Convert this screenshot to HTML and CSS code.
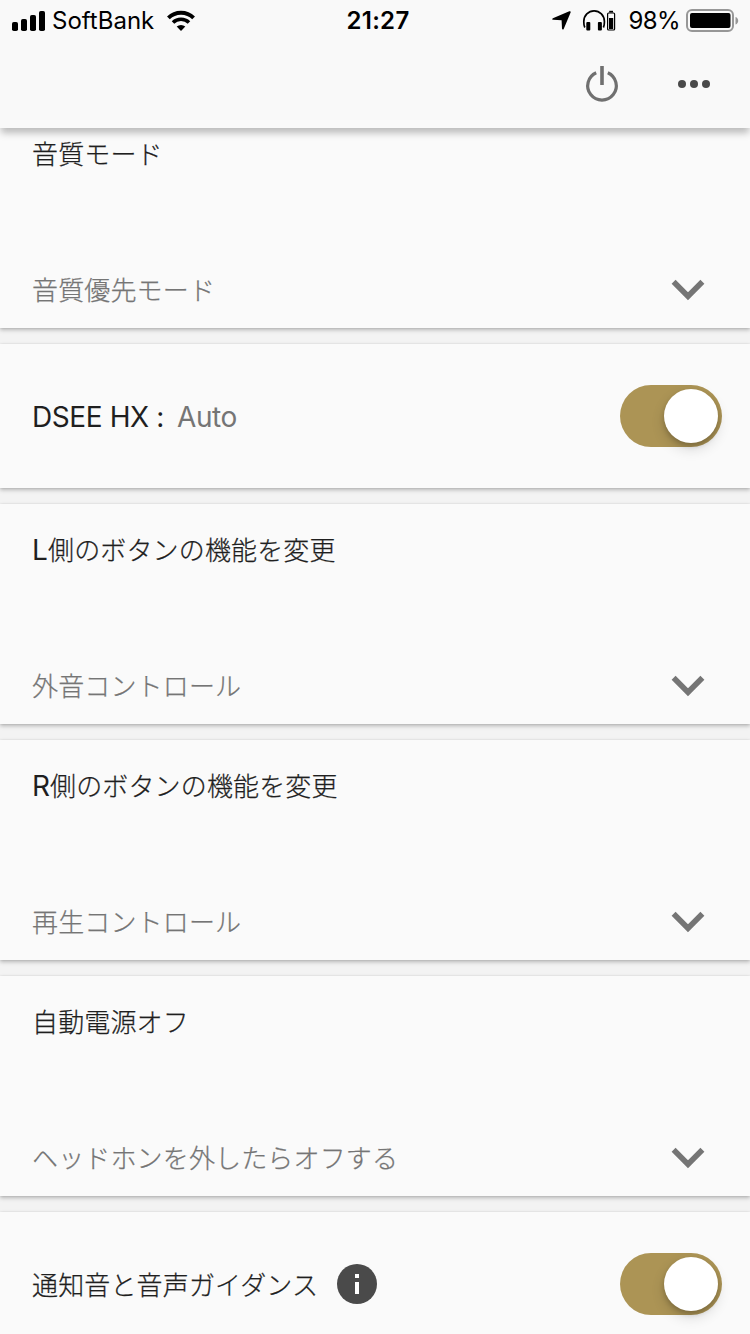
FILE: index.html
```html
<!DOCTYPE html>
<html lang="ja">
<head>
    <meta charset="UTF-8">
    <meta name="viewport" content="width=device-width, initial-scale=1.0">
    <title>Headphones</title>
    <link rel="stylesheet" href="styles.css">
</head>
<body>
    <header class="header">
        <div class="status-bar">
            <div class="status-left">
                <svg class="signal" width="34" height="20" viewBox="0 0 34 20">
                    <rect x="0" y="11" width="6" height="9" rx="1.8"/>
                    <rect x="9" y="8" width="6" height="12" rx="1.8"/>
                    <rect x="18" y="4" width="6" height="16" rx="1.8"/>
                    <rect x="27" y="0" width="6" height="20" rx="1.8"/>
                </svg>
                <span class="carrier">SoftBank</span>
                <svg class="wifi" width="28" height="20" viewBox="0 0 28 20">
                    <path d="M1.4 6.9a18 18 0 0 1 25.2 0" fill="none" stroke="#000" stroke-width="3.9"/>
                    <path d="M6 11.5a11.5 11.5 0 0 1 16 0" fill="none" stroke="#000" stroke-width="3.6"/>
                    <path d="M14 20l-4.3-4.4a6.3 6.3 0 0 1 8.6 0z"/>
                </svg>
            </div>
            <span class="time">21:27</span>
            <div class="status-right">
                <svg class="location" width="19" height="19" viewBox="0 0 19 19">
                    <path d="M17.3.3.9 7.2c-1 .5-.8 1.5.3 1.6l8.4.4.4 8.3c.1 1.2 1.2 1.5 1.7.4L18.6 1.6c.4-1-.4-1.7-1.3-1.3z"/>
                </svg>
                <svg class="headphones" width="33" height="21" viewBox="0 0 33 21">
                    <path d="M1.8 17.5C.7 15.5.8 14 .8 11.500a10.300 10.700 0 0 1 20.600 0c0 2.500.1 4-1 6" fill="none" stroke="#000" stroke-width="1.7"/>
                    <rect x="3.3" y="12" width="4" height="8.5" rx="1"/>
                    <rect x="14.900" y="12" width="4" height="8.5" rx="1"/>
                    <rect x="24.600" y="3" width="7" height="17" rx="1" fill="none" stroke="#000" stroke-width="1.2"/>
                    <rect x="26.200" y="0.8" width="3.8" height="1.7"/>
                    <rect x="26" y="8" width="4.2" height="11"/>
                </svg>
                <span class="percent">98%</span>
                <svg class="battery" width="53" height="24" viewBox="0 0 53 24">
                    <rect x="1" y="1" width="46" height="21" rx="5" fill="none" stroke="#979797" stroke-width="2"/>
                    <rect x="4" y="4" width="40.500" height="15" rx="2"/>
                    <path d="M49.500 8c3.600 1 3.600 6.500 0 7.500z" fill="#979797"/>
                </svg>
            </div>
        </div>
        <div class="toolbar">
            <svg class="power" width="34" height="38" viewBox="0 0 34 38" fill="none" stroke="#707070">
                <path d="M11.200 7.700a14.300 14.300 0 1 0 11.600 0" stroke-width="3.2"/>
                <path d="M17 1v19" stroke-width="3.6"/>
            </svg>
            <svg class="more" width="32" height="8" viewBox="0 0 32 8" fill="#4a4a4a">
                <circle cx="4" cy="4" r="4"/>
                <circle cx="16" cy="4" r="4"/>
                <circle cx="28" cy="4" r="4"/>
            </svg>
        </div>
    </header>

    <main class="cards">
        <section class="card select-card">
            <div class="title">音質モード</div>
            <div class="value-row">
                <span class="value">音質優先モード</span>
                <svg class="chevron" width="32" height="20" viewBox="0 0 32 20"><path d="M1.6 1.8 16 16.2 30.4 1.8"/></svg>
            </div>
        </section>

        <section class="card toggle-card">
            <div class="latin">DSEE HX :<span class="mode">Auto</span></div>
            <div class="toggle"><div class="knob"></div></div>
        </section>

        <section class="card select-card">
            <div class="title"><span class="side side-l">L</span>側のボタンの機能を変更</div>
            <div class="value-row">
                <span class="value">外音コントロール</span>
                <svg class="chevron" width="32" height="20" viewBox="0 0 32 20"><path d="M1.6 1.8 16 16.2 30.4 1.8"/></svg>
            </div>
        </section>

        <section class="card select-card">
            <div class="title"><span class="side side-r">R</span>側のボタンの機能を変更</div>
            <div class="value-row">
                <span class="value">再生コントロール</span>
                <svg class="chevron" width="32" height="20" viewBox="0 0 32 20"><path d="M1.6 1.8 16 16.2 30.4 1.8"/></svg>
            </div>
        </section>

        <section class="card select-card">
            <div class="title">自動電源オフ</div>
            <div class="value-row">
                <span class="value">ヘッドホンを外したらオフする</span>
                <svg class="chevron" width="32" height="20" viewBox="0 0 32 20"><path d="M1.6 1.8 16 16.2 30.4 1.8"/></svg>
            </div>
        </section>

        <section class="card toggle-card">
            <div class="guidance">
                <span class="title">通知音と音声ガイダンス</span>
                <svg class="info" width="40" height="40" viewBox="0 0 40 40">
                    <circle cx="20" cy="20" r="20" fill="#4a4a4a"/>
                    <path d="M18 10h4v4h-4zM18 18h4v12h-4z" fill="#fff"/>
                </svg>
            </div>
            <div class="toggle"><div class="knob"></div></div>
        </section>
    </main>
</body>
</html>
```
FILE: styles.css
```css
* {
    box-sizing: border-box;
}
body {
    margin: 0;
    height: 1334px;
    overflow: hidden;
    background: #f3f3f3;
    color: #1f1f1f;
    font-family: Inter, 'Noto Sans CJK JP', sans-serif;
}
svg {
    display: block;
    flex: none;
    overflow: visible;
}

/* header */
.header {
    position: relative;
    z-index: 1;
    height: 128px;
    background: #f9f9f9;
    box-shadow: 0 6px 7px -1px rgba(0, 0, 0, 0.25);
}
.status-bar {
    display: grid;
    grid-template-columns: 1fr auto 1fr;
    height: 41px;
    padding: 1px 11px 0 12px;
    font-size: 24px;
    line-height: 40px;
    color: #000;
}
.status-left,
.status-right {
    display: flex;
    align-items: center;
}
.status-right {
    justify-content: flex-end;
}
.signal,
.wifi,
.location,
.battery {
    margin-top: -1px;
}
.headphones {
    margin: -2px 13px 0 12px;
}
.carrier {
    margin: 0 13px 0 6px;
}
.time {
    padding-left: 5px;
    font-weight: 600;
    letter-spacing: 0.3px;
}
.percent {
    margin-right: 6px;
    letter-spacing: -0.6px;
}
.toolbar {
    display: flex;
    align-items: center;
    justify-content: flex-end;
    gap: 59px;
    height: 87px;
    padding-right: 40px;
}
.power {
    margin-top: -1px;
}
.more {
    margin-top: -2px;
}

/* cards */
.cards {
    display: flex;
    flex-direction: column;
    gap: 16px;
    margin-top: -20px;
}
.card {
    background: #fafafa;
    box-shadow: 0 2px 4px rgba(0, 0, 0, 0.25), 0 0 2px rgba(0, 0, 0, 0.1);
}
.select-card {
    display: flex;
    flex-direction: column;
    justify-content: space-between;
    height: 220px;
    padding: 25px 46px 19px 32px;
}
.title,
.value {
    font-family: 'Noto Sans CJK JP', sans-serif;
    font-size: 26px;
    font-weight: 300;
    line-height: 40px;
    letter-spacing: 0.15px;
    -webkit-text-stroke: 0.25px currentColor;
}
.value {
    color: #757575;
}
.value-row {
    display: flex;
    align-items: center;
    justify-content: space-between;
}
.value-row .chevron {
    margin-top: 2px;
}
.side {
    display: inline-block;
    font-family: Inter, sans-serif;
    font-size: 28px;
    font-weight: 400;
    line-height: 1;
    -webkit-text-stroke: 0;
}
.side-l {
    width: 16px;
}
.side-r {
    width: 18px;
}
.chevron path {
    fill: none;
    stroke: #757575;
    stroke-width: 5.6;
}
.toggle-card {
    display: flex;
    align-items: center;
    justify-content: space-between;
    height: 144px;
    padding: 0 28px 0 32px;
}
.latin {
    padding-top: 2px;
    font-size: 28px;
    letter-spacing: -0.4px;
    font-feature-settings: 'calt' 0;
}
.mode {
    margin-left: 13px;
    color: #757575;
}
.guidance {
    display: flex;
    align-items: center;
    gap: 19px;
}
.guidance .title {
    margin-top: -1px;
}
.toggle {
    display: flex;
    justify-content: flex-end;
    width: 102px;
    height: 62px;
    padding: 4px;
    border-radius: 31px;
    background: #ac9455;
}
.knob {
    width: 54px;
    height: 54px;
    border-radius: 50%;
    background: #fff;
    box-shadow: 0 6px 14px rgba(0, 0, 0, 0.14), 0 3px 5px rgba(0, 0, 0, 0.18);
}
```
